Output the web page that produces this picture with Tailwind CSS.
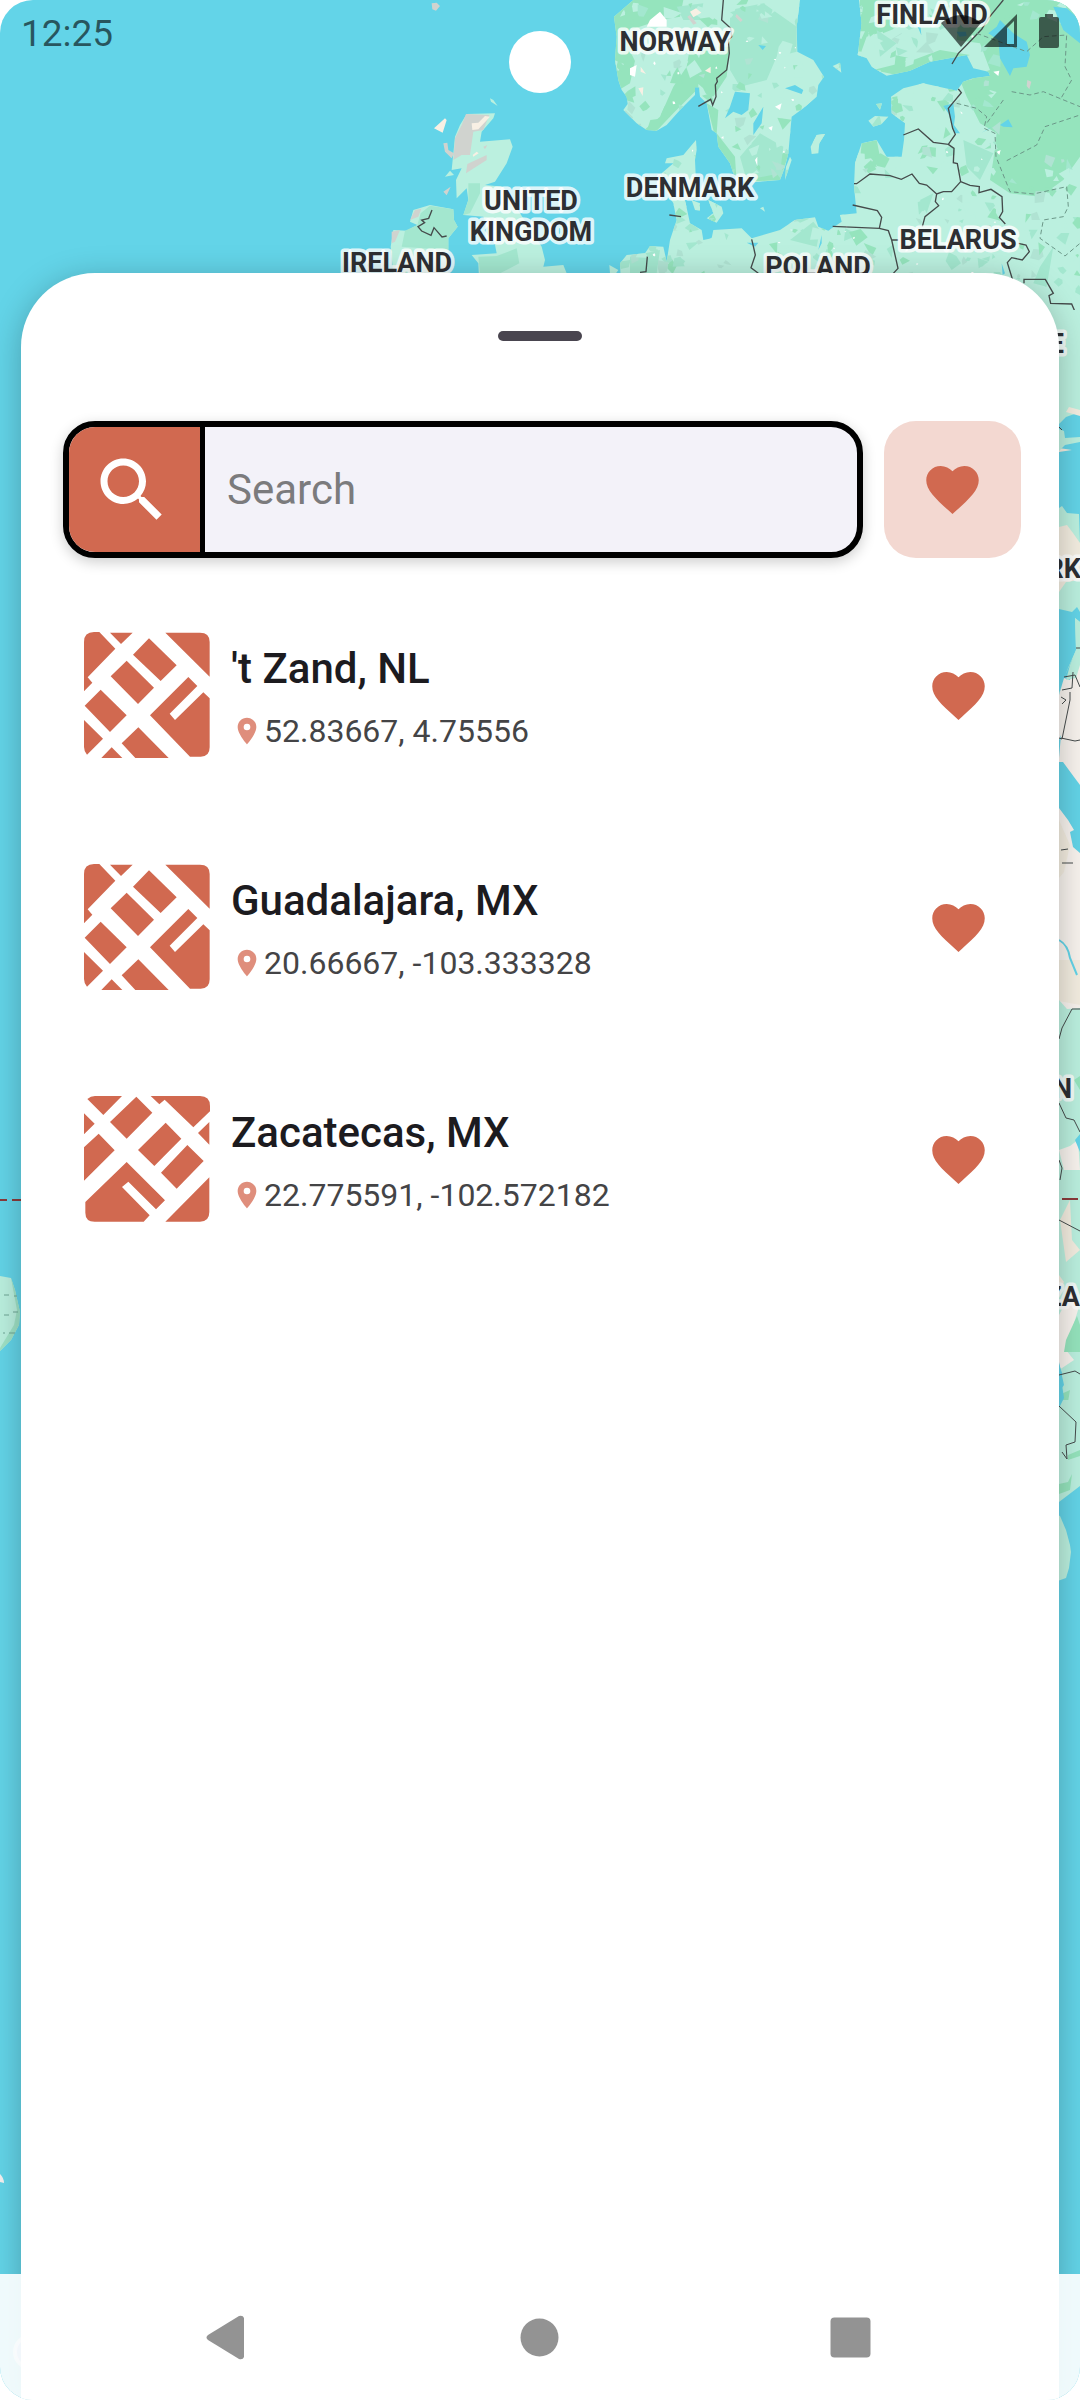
<!DOCTYPE html>
<html lang="en">
<head>
<meta charset="utf-8">
<meta name="viewport" content="width=device-width, initial-scale=1">
<title>Saved places</title>
<script src="https://cdn.jsdelivr.net/npm/@tailwindcss/browser@4"></script>
</head>
<body class="bg-white font-['Roboto',sans-serif]">
<svg class="hidden" aria-hidden="true">
  <symbol id="heart" viewBox="0 0 24 24"><path d="M12 21.35l-1.45-1.32C5.4 15.36 2 12.28 2 8.5 2 5.42 4.42 3 7.5 3c1.74 0 3.41.81 4.5 2.09C13.09 3.81 14.76 3 16.5 3 19.58 3 22 5.42 22 8.5c0 3.78-3.4 6.86-8.55 11.54L12 21.35z"/></symbol>
  <symbol id="pin" viewBox="0 0 24 24"><path d="M12 2C8.13 2 5 5.13 5 9c0 5.25 7 13 7 13s7-7.75 7-13c0-3.87-3.13-7-7-7zm0 9.5a2.5 2.5 0 0 1 0-5 2.5 2.5 0 0 1 0 5z"/></symbol>
  <symbol id="blocks" viewBox="0 0 378 378">
    <path d="M0 30Q0 0 30 0H46L94 50 11 136 25 152 0 178ZM78 2H146L111 36ZM195 19 278 100 230 147 147 68ZM128 86 210 167 162 216 80 133ZM244 2H348Q377 2 377 30V134ZM50 173 128 250 78 300 2 221ZM0 264 57 320 9 368Q0 358 0 345ZM83 346 115 378H52ZM163 286 254 378H154L113 334ZM313 135 340 162 257 245 273 264 358 181 377 199V346Q377 374 350 374H318L198 250Z"/>
  </symbol>
</svg>

<div class="relative isolate flex min-h-screen flex-col overflow-hidden rounded-[33px] bg-[#63d4e8]">

  <!-- Map behind the sheet -->
  <svg class="absolute inset-0 -z-10 h-full w-full" viewBox="0 0 1080 2400" preserveAspectRatio="xMidYMin slice" aria-hidden="true">
    <defs>
      <path id="landN" d="M-140 0-198 50-190 110-195 180-185 240-175 270-160 290-157 312-170 330-130 370-100 390-70 392-40 375 0 330 30 300 45 285 45 262 58 262 60 290 80 310 95 390 110 400 115 440 150 490 160 520 200 548 240 545 300 540 315 500 325 460 335 350 370 325 410 290 415 255 432 230 400 180 352 155 350 80 360 0ZM537 0 545 70 533 165 560 175 575 200 620 227 690 212 750 185 860 165 880 205 925 215 930 228 880 235 850 245 830 272 730 250 670 265 633 290 635 340 675 370 672 420 665 470 620 470 590 420 545 430 525 490 522 560 530 640 480 645 485 665 445 692 415 680 405 652 345 660 300 690 215 715 185 685 100 690 95 715 70 720 65 690 30 670 15 600 50 590 45 480 50 450 48 420 10 465-40 475-45 490-20 490-55 520-50 560-20 610-10 660-30 720-40 785-50 740-90 738-105 760-160 765-180 790-175 900 1200 1000 1200 0ZM85 600 125 620 130 640 110 668 80 655 100 640ZM35 600 60 610 60 632 45 630ZM435 402 410 405 392 440 395 462 415 460 418 430ZM565 362 585 348 625 350 605 372 580 380ZM588 312 606 310 600 330ZM458 198 480 188 484 218ZM330 470 318 500 315 540 335 480ZM240 625 250 620 255 635Z"/>
      <clipPath id="clipN"><use href="#landN"/></clipPath>
    </defs>

    <!-- Northern and eastern Europe -->
    <g transform="translate(680 0) scale(.33333)">
      <use href="#landN" fill="#bbf0df"/>
      <g clip-path="url(#clipN)">
        <path fill="#95e4bd" d="M-200 0H10L0 50-60 60-150 90-130 160-150 250-200 280ZM30 140 150 140 140 230 100 290 50 270 -20 340-70 392-110 392-60 350-20 260 20 200ZM80 310 115 330 110 400 165 470 170 550 130 530 100 390ZM540 0H720L690 70 560 110 535 180ZM580 210 700 180 780 150 870 165 780 190 650 225ZM840 0H1200V470L1150 540 1080 590 990 580 930 540 940 480 950 400 900 370 860 290 840 240 930 210 900 130 830 120ZM545 430 590 420 600 470 540 480ZM220 500 330 450 300 540 200 545Z"/>
        <path fill="#a3e7cf" d="M150 30 250 10 350 80 350 155 290 170 260 240 180 260 150 210ZM-10 20 70 10 60 60 10 60ZM590 90 650 130 600 170ZM180 470 240 400 310 440 300 520 200 540ZM720 600 760 580 740 640ZM850 420 940 460 900 540 860 500ZM400 665 420 690 410 740 330 720ZM-150 770-60 750-70 820-150 820ZM1120 740 1080 800 1060 850 1100 860ZM750 25 840 60 780 90Z"/>
        <g id="patches"></g>
        <path fill="#fff" d="M-90 60-60 35-40 60-40 80-100 80ZM-150 205-130 195-135 230-150 225ZM265 383 278 378 275 392ZM285 320 305 310 300 330ZM950 455 962 450 958 465ZM940 215 958 212 955 228ZM225 480 232 470 232 498Z"/>
        <path fill="#f8f0e4" d="M30 35 48 25 64 38 40 52ZM75 212 92 200 92 220ZM-118 215-102 222-118 200ZM-125 265-110 262-112 288Z"/>
        <path fill="#d0d3cf" d="M22 50 30 45 50 70 40 74ZM170 42 188 60 182 66 166 50ZM1042 240 1054 245 1048 268 1040 258Z"/>
        <path fill="#63d4e8" d="M165 275 210 280 205 330 185 345 160 335 135 355 150 320ZM250 320 245 370 220 405 220 370ZM315 265 345 255 370 270 365 282ZM235 135 258 138 248 150ZM925 100 950 80 960 60 1000 100 1040 125 1050 165 1040 200 1000 205 990 228 960 175 955 120ZM1120 20 1160 25 1200 60V130L1150 90ZM790 318 820 310 825 350 822 375 840 400 825 400 805 340ZM960 375 985 358 998 382 970 380ZM712 78 722 82 724 106ZM905 398 935 380 925 388ZM200 728 235 728 225 740ZM425 705 425 730 415 750ZM965 790 975 820 968 825ZM830 95 858 95 860 108 838 110Z"/>
      </g>
      <g fill="none" stroke="#454b4b" stroke-width="4">
        <path d="M130 0 125 60 152 85 155 110 145 120 148 160 140 210 110 235 112 245 106 255 108 290 98 315 92 298 55 319M970 0 925 55 905 88 860 135 835 160 816 192M835 267 844 278 805 325 818 385 826 403 805 433 760 427 715 387 670 405M805 433 822 445 820 488 832 491 842 545 815 575 790 575 770 582 740 555 718 550 696 522 664 538 630 527 570 522 530 551 522 551M770 582 766 605 776 617 735 650 727 680M518 615 592 632 605 652 598 685 458 679M598 685 625 692 635 720 655 720M635 720 654 805 640 820M842 545 870 556 898 560 897 578 933 568 966 590 968 635 958 652 976 672M1015 730 1038 735 1048 755 1027 780 995 773 982 788 998 840M215 718 218 730 226 765 213 803 235 820M-32 645 3 650M-98 770-102 815-120 817"/>
        <path d="M1032 850V838H1096L1120 880 1107 887 1112 910 1175 912 1200 970"/>
        <path stroke="#6b9788" stroke-width="3" stroke-dasharray="14 9" d="M830 310 890 325 920 350 912 385 945 400 948 470 990 575 1060 582 1160 560 1165 620 1150 650 1090 660 1080 715 1155 768 1200 730M980 482 1070 435 1095 380 1200 345M995 275 1050 285 1090 275 1200 320M890 100 1040 155 1090 110 1160 105 1155 200 1175 240 1140 300M970 300 920 370"/>
      </g>
    </g>

    <!-- British Isles -->
    <g transform="translate(330 0) scale(.33333)">
      <path fill="#bbf0df" d="M410 342 495 340 490 355 455 395 450 425 540 418 548 440 530 490 495 545 465 555 520 560 570 640 635 740 645 780 640 800 700 795 710 820V900H450L445 790 425 765 500 760 495 735 460 650 400 645 415 600 410 565 380 595 378 540 395 505 365 510 375 410 390 375ZM250 630 300 615 370 628 372 660 383 680 355 715V820H190L182 740 190 690 230 692 262 675 240 665ZM480 295 490 300 503 318 483 305ZM345 530 360 512 372 525ZM838 795 865 810 858 820H840Z"/>
      <path fill="#a3e7cf" d="M415 550 450 550 450 580 420 640 400 645 415 600ZM272 640 300 617 370 628 372 660 383 680 355 715V750L215 740 225 692 262 675ZM445 770 500 768 560 745 568 790 510 820 450 820Z"/>
      <path fill="#d0d3cf" d="M408 342 478 345 460 390 430 395 420 465 395 465 370 480 375 415 395 375ZM408 520 412 492 470 465 470 480ZM340 430 352 428 355 450 372 460 365 475 345 455ZM340 575 362 560 350 586ZM305 10 320 8 330 18 318 32 307 28ZM240 660 255 630 274 626 265 650ZM185 695 210 690 195 725 185 730ZM460 440 472 435 465 448Z"/>
      <path fill="#f8f0e4" d="M425 370 445 368 465 348 480 350 445 388 427 390ZM312 385 345 355 350 360 338 398ZM428 465 440 455 446 460 430 470Z"/>
      <path fill="none" stroke="#454b4b" stroke-width="4" d="M306 630 296 655 275 660 284 668 264 680 275 693 303 706 312 683 336 711 350 708"/>
    </g>

    <!-- Eastern edge: Turkey, the Levant, Africa, Madagascar -->
    <g>
      <path fill="#bbf0df" d="M1040 310H1080V412L1066 417 1059 424Z"/>
      <path fill="#f3ede0" d="M1066 412 1069 407 1080 410V416ZM1059 448 1072 450 1059 452Z"/>
      <path fill="#bbf0df" d="M1059 429 1064 431 1065 438 1080 437V442L1065 445 1059 451ZM1059 508 1062 506 1067 513 1079 514 1080 544V620L1075 618 1072 612 1059 608Z"/>
      <path fill="#f3ede0" d="M1059 527 1067 525 1073 533 1080 543V580L1066 582 1059 592Z"/>
      <path fill="#bbf0df" d="M1059 604Q1070 588 1080 585V650L1072 660 1062 682 1059 695V690Z"/>
      <path fill="#63d4e8" d="M1059 609 1072 612 1077 607 1080 612V622L1075 618 1076 650 1068 668 1059 693Z"/>
      <path fill="#f8f3ee" d="M1080 645 1075 655 1070 680 1064 678 1059 695V1400H1080Z"/>
      <path fill="#bbf0df" d="M1080 622 1075 618 1076 650 1070 665 1066 680 1076 678 1080 665Z"/>
      <path fill="#63d4e8" d="M1059 740 1061 735 1059 758ZM1059 762 1063 762 1074 777 1080 785V853L1073 847 1070 832 1074 830 1068 820 1059 808Z"/>
      <path fill="#f3ede0" d="M1059 820 1070 845 1064 872 1059 878ZM1059 960H1080V1005L1059 1001Z"/>
      <path fill="none" stroke="#63d4e8" stroke-width="2" d="M1059 940Q1068 945 1070 958L1077 975"/>
      <path fill="#bbf0df" d="M1059 1000 1067 1009 1080 1008V1405L1059 1412Z"/>
      <path fill="#f8f3ee" d="M1059 1150 1070 1146 1078 1140 1080 1170 1064 1170ZM1059 1315 1075 1285 1078 1310 1066 1350 1074 1360 1059 1370Z"/>
      <path fill="#f3ede0" d="M1060 1220 1070 1200 1072 1240 1080 1250 1066 1262ZM1059 1275 1064 1282 1059 1290Z"/>
      <path fill="#95e4bd" d="M1074 1080 1080 1076V1090ZM1066 1340 1077 1316 1080 1325V1352L1064 1352ZM1059 1395 1070 1390 1068 1402 1059 1406Z"/>
      <path fill="#63d4e8" d="M1075 1140 1080 1134V1152ZM1059 1362 1064 1385 1059 1392Z"/>
      <path fill="#bbf0df" d="M1059 1400H1080V1486L1059 1502Z"/>
      <path fill="#95e4bd" d="M1059 1484 1068 1482 1072 1474 1070 1490 1059 1494ZM1068 1455 1080 1450V1456L1068 1460Z"/>
      <path fill="#bbf0df" d="M1052 1513 1060 1516 1066 1530 1070 1545 1071 1552 1069 1568 1066 1578 1052 1583Z"/>
      <path fill="#63d4e8" d="M1059 1364 1062 1373 1061 1378 1064 1398 1059 1408Z"/>
      <path fill="none" stroke="#454b4b" stroke-width="1" d="M1059 427 1062 430M1064 677 1075 675 1080 687M1076 648H1080M1062 690 1072 688 1073 672M1059 738 1062 739 1070 700V692M1061 738 1075 741 1080 740M1061 697 1066 700 1062 704M1061 850 1068 849M1062 863H1073M1059 1039 1062 1028 1072 1009H1080M1059 1103 1066 1118 1074 1120 1080 1132M1059 1160 1062 1168 1060 1180M1059 1220 1080 1231M1059 1375 1075 1371 1080 1374M1059 1406 1076 1422 1075 1442 1066 1445 1067 1459 1062 1452"/>
      <path stroke="#8a3b3b" stroke-width="2" d="M1062 1199H1078"/>
    </g>

    <!-- Western edge: equator line and South America -->
    <path stroke="#8a3b3b" stroke-width="2" d="M0 1200H7M12 1200H22"/>
    <path fill="#bbf0df" d="M0 1276 11 1278 15 1290 20 1312 19 1325 11 1340 0 1351Z"/>
    <path fill="#9fe2c6" d="M11 1278 15 1290 20 1312 19 1325 11 1340 0 1351V1348L14 1325 17 1310Z"/>
    <path stroke="#6fa695" stroke-width="1" d="M4 1295H9M14 1296H17M4 1315H9M13 1312H18M3 1333H5M9 1333H15"/>
    <path fill="#f5f1f1" d="M0 2174Q4 2178 4 2183L0 2182Z"/>
    <circle cx="31" cy="2352" r="16" fill="#8fc4f0" stroke="#fff" stroke-opacity=".6" stroke-width="4"/>

    <g class="font-['Roboto',sans-serif] text-[27px] font-bold" fill="#2d2f33" stroke="#fff" stroke-opacity=".8" stroke-width="7" stroke-linejoin="round" paint-order="stroke" text-anchor="middle">
      <text x="675" y="51">NORWAY</text>
      <text x="932" y="24">FINLAND</text>
      <text x="531" y="210">UNITED</text>
      <text x="531" y="241">KINGDOM</text>
      <text x="690" y="197">DENMARK</text>
      <text x="958" y="249">BELARUS</text>
      <text x="818" y="276">POLAND</text>
      <text x="397" y="272">IRELAND</text>
      <text x="1064" y="353" text-anchor="end">UKRAINE</text>
      <text x="1081" y="578" text-anchor="end">TÜRK</text>
      <text x="1072" y="1098" text-anchor="end">SUDAN</text>
      <text x="1080" y="1306" text-anchor="end">TANZA</text>
    </g>
  </svg>

  <!-- Status bar -->
  <header class="relative h-[273px] shrink-0">
    <div class="flex items-start justify-between px-[21px] pt-3 text-black/60">
      <time class="text-[37px] leading-[44px]">12:25</time>
      <div class="flex items-center gap-[3px] pt-[2px]">
        <svg class="h-[34px] w-[40px]" viewBox="0 0 40 34" fill="currentColor" role="img" aria-label="Wi-Fi"><path d="M20 33 0 9Q20-7 40 9Z"/></svg>
        <svg class="mr-[18px] h-[34px] w-[34px]" viewBox="0 0 34 34" fill="currentColor" fill-rule="evenodd" role="img" aria-label="Mobile signal"><path d="M0 33 33 0V33ZM23 14V30H30V7Z"/></svg>
        <svg class="h-[34px] w-[20px]" viewBox="0 0 20 34" fill="currentColor" role="img" aria-label="Battery"><path d="M6 0H14V3H18Q20 3 20 5V32Q20 34 18 34H2Q0 34 0 32V5Q0 3 2 3H6Z"/></svg>
      </div>
    </div>
    <div class="absolute top-[31px] left-1/2 size-[62px] -translate-x-1/2 rounded-full bg-white"></div>
  </header>

  <!-- Bottom sheet -->
  <main class="mx-[21px] flex-1 rounded-t-[74px] bg-white pt-[58px] pb-[126px] shadow-[0_6px_32px_rgba(0,0,0,0.25)]">
    <div class="mx-auto h-[10px] w-[84px] rounded-full bg-[#49454f]"></div>

    <div class="mt-[80px] flex gap-[21px] pr-[38px] pl-[42px]">
      <form class="flex h-[137px] min-w-0 flex-1 overflow-hidden rounded-[32px] border-[6px] border-black bg-[#f3f2f9] shadow-[0_4px_14px_rgba(0,0,0,0.2)]">
        <button type="submit" aria-label="Search" class="flex w-[131px] shrink-0 items-center justify-center bg-[#d16950] pr-[6px] text-white">
          <svg class="size-[84px]" viewBox="0 0 24 24" fill="currentColor"><path d="M15.5 14h-.79l-.28-.27C15.41 12.59 16 11.11 16 9.5 16 5.91 13.09 3 9.5 3S3 5.91 3 9.5 5.91 16 9.5 16c1.61 0 3.09-.59 4.23-1.57l.27.28v.79l5 4.99L20.49 19l-4.99-5zm-6 0C7.01 14 5 11.99 5 9.5S7.01 5 9.5 5 14 7.01 14 9.5 11.99 14 9.5 14z"/></svg>
        </button>
        <input type="search" aria-label="Search places" placeholder="Search" class="min-w-0 flex-1 border-l-[5px] border-black bg-transparent px-[22px] text-[42px] text-[#1c1b1f] outline-none placeholder:text-[#7b7b7d]">
      </form>
      <button type="button" aria-label="Show favourites" class="flex size-[137px] shrink-0 items-center justify-center rounded-[32px] bg-[#f3d8d1] text-[#d16950]">
        <svg class="size-[63px]" fill="currentColor"><use href="#heart"/></svg>
      </button>
    </div>

    <ul class="mt-[74px] flex flex-col gap-[106px] pr-[69px] pl-[63px]">
      <li class="flex h-[126px] items-center gap-[21px]">
        <svg class="size-[126px] shrink-0 text-[#d16950]" fill="currentColor" aria-hidden="true"><use href="#blocks"/></svg>
        <div class="flex h-full min-w-0 flex-1 flex-col gap-[10px] pt-[5px]">
          <h2 class="text-[42px] leading-[63px] font-medium text-[#1c1b1f]">'t Zand, NL</h2>
          <p class="flex items-center gap-px text-[32px] leading-[42px] text-[#444446]"><svg class="size-[32px] text-[#df8e7c]" fill="currentColor" aria-hidden="true"><use href="#pin"/></svg>52.83667, 4.75556</p>
        </div>
        <button type="button" aria-label="Remove 't Zand from favourites" class="text-[#d16950]"><svg class="size-[63px]" fill="currentColor"><use href="#heart"/></svg></button>
      </li>
      <li class="flex h-[126px] items-center gap-[21px]">
        <svg class="size-[126px] shrink-0 text-[#d16950]" fill="currentColor" aria-hidden="true"><use href="#blocks"/></svg>
        <div class="flex h-full min-w-0 flex-1 flex-col gap-[10px] pt-[5px]">
          <h2 class="text-[42px] leading-[63px] font-medium text-[#1c1b1f]">Guadalajara, MX</h2>
          <p class="flex items-center gap-px text-[32px] leading-[42px] text-[#444446]"><svg class="size-[32px] text-[#df8e7c]" fill="currentColor" aria-hidden="true"><use href="#pin"/></svg>20.66667, -103.333328</p>
        </div>
        <button type="button" aria-label="Remove Guadalajara from favourites" class="text-[#d16950]"><svg class="size-[63px]" fill="currentColor"><use href="#heart"/></svg></button>
      </li>
      <li class="flex h-[126px] items-center gap-[21px]">
        <svg class="size-[126px] shrink-0 rotate-90 text-[#d16950]" fill="currentColor" aria-hidden="true"><use href="#blocks"/></svg>
        <div class="flex h-full min-w-0 flex-1 flex-col gap-[10px] pt-[5px]">
          <h2 class="text-[42px] leading-[63px] font-medium text-[#1c1b1f]">Zacatecas, MX</h2>
          <p class="flex items-center gap-px text-[32px] leading-[42px] text-[#444446]"><svg class="size-[32px] text-[#df8e7c]" fill="currentColor" aria-hidden="true"><use href="#pin"/></svg>22.775591, -102.572182</p>
        </div>
        <button type="button" aria-label="Remove Zacatecas from favourites" class="text-[#d16950]"><svg class="size-[63px]" fill="currentColor"><use href="#heart"/></svg></button>
      </li>
    </ul>
  </main>

  <!-- System navigation, drawn over the sheet and the map -->
  <nav class="absolute inset-x-0 bottom-0 grid h-[126px] grid-cols-3 place-items-center bg-white/90 px-[74px] text-[#939393]">
    <button type="button" aria-label="Back"><svg class="size-[63px]" viewBox="0 0 63 63" fill="currentColor"><path d="M10 29 41 10Q45 9 46 12V51Q45 54 41 53L10 34Q7 31.500 10 29Z"/></svg></button>
    <button type="button" aria-label="Home"><svg class="size-[63px]" viewBox="0 0 63 63" fill="currentColor"><circle cx="31.500" cy="31.500" r="19"/></svg></button>
    <button type="button" aria-label="Recent apps"><svg class="size-[63px]" viewBox="0 0 63 63" fill="currentColor"><rect x="11.500" y="11.500" width="40" height="40" rx="4"/></svg></button>
  </nav>
</div>

<script>
  // Vegetation speckle over the northern land mass, from a fixed seed.
  (function () {
    var seed = 11, out = '';
    function rnd() { seed = (seed * 16807) % 2147483647; return seed / 2147483647; }
    var tones = ['#95e4bd', '#a3e7cf', '#bbf0df', '#95e4bd', '#bbf0df', '#a3e7cf', '#b0e3d3', '#bbf0df'];
    function patch(x, y, s, c) {
      var pts = [], n = 3 + Math.floor(rnd() * 3), a0 = rnd() * 6;
      for (var i = 0; i < n; i++) {
        var a = a0 + i * 6.283 / n, r = s * (0.3 + rnd() * 1.2);
        pts.push(Math.round(x + Math.cos(a) * r) + ',' + Math.round(y + Math.sin(a) * r));
      }
      out += '<polygon points="' + pts.join(' ') + '" fill="' + c + '"/>';
    }
    for (var i = 0; i < 620; i++) {
      var x = -200 + rnd() * 1400, y = rnd() * 880;
      if (x > 960 && y > 60 && y < 480) continue;
      if (x > 530 && x < 720 && y > 530 && y < 690) continue;
      patch(x, y, 7 + rnd() * 17, tones[Math.floor(rnd() * tones.length)]);
    }
    for (var j = 0; j < 40; j++) patch(-200 + rnd() * 1150, rnd() * 820, 4, '#ffffff');
    document.getElementById('patches').innerHTML = out;
  })();
</script>
</body>
</html>
